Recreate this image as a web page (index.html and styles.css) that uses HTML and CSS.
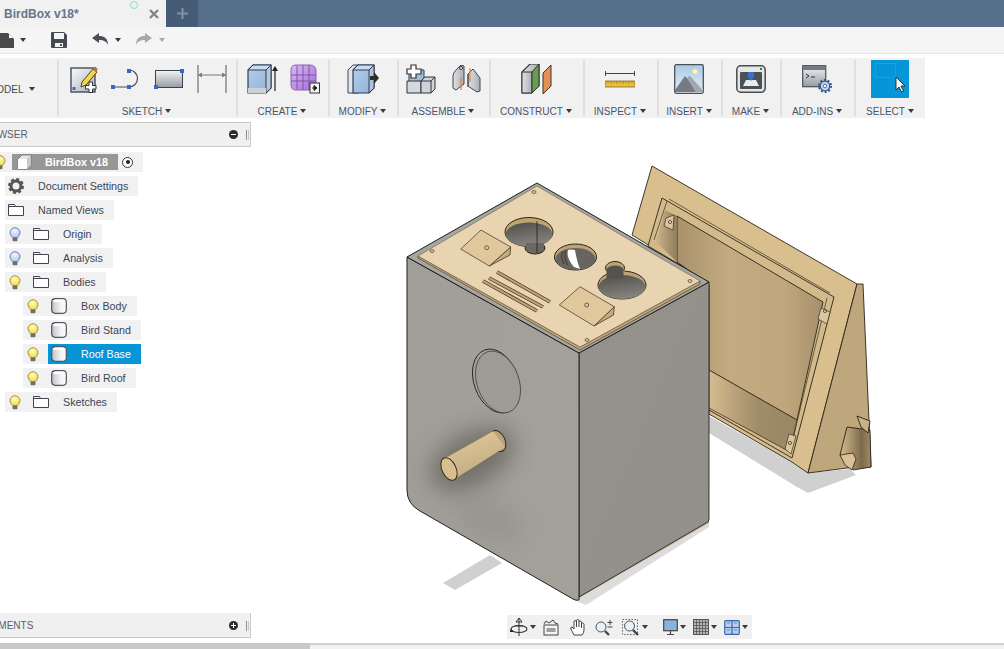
FILE: index.html
```html
<!DOCTYPE html>
<html lang="en">
<head>
<meta charset="utf-8">
<title>BirdBox v18</title>
<link rel="stylesheet" href="styles.css">
</head>
<body>
<svg class="defs" width="0" height="0" aria-hidden="true">
  <defs>
    <linearGradient id="gSheet" x1="0" y1="0" x2="1" y2="1"><stop offset="0" stop-color="#fafafa"/><stop offset="1" stop-color="#aab0be"/></linearGradient>
    <linearGradient id="gRect" x1="0" y1="0" x2="0" y2="1"><stop offset="0" stop-color="#f4f4f4"/><stop offset="1" stop-color="#959aa6"/></linearGradient>
    <linearGradient id="gBlue" x1="0" y1="0" x2="1" y2="1"><stop offset="0" stop-color="#b7cfe8"/><stop offset="1" stop-color="#8fb0d6"/></linearGradient>
    <linearGradient id="gGrey" x1="0" y1="0" x2="1" y2="0"><stop offset="0" stop-color="#dfe2e6"/><stop offset="1" stop-color="#a9aeb8"/></linearGradient>
    <linearGradient id="gPurple" x1="0" y1="0" x2="1" y2="1"><stop offset="0" stop-color="#d9b8f0"/><stop offset="1" stop-color="#a36fd4"/></linearGradient>
    <linearGradient id="gSky" x1="0" y1="0" x2="0" y2="1"><stop offset="0" stop-color="#a8cbe8"/><stop offset="1" stop-color="#e6edf3"/></linearGradient>
    <linearGradient id="gCyl" x1="0" y1="0" x2="1" y2="0"><stop offset="0" stop-color="#bfc2c7"/><stop offset=".6" stop-color="#f2f2f2"/><stop offset="1" stop-color="#fff"/></linearGradient>
    <radialGradient id="gBulbY" cx=".45" cy=".35" r=".7"><stop offset="0" stop-color="#fffbc0"/><stop offset="1" stop-color="#f1d93c"/></radialGradient>
    <radialGradient id="gBulbB" cx=".45" cy=".35" r=".7"><stop offset="0" stop-color="#f2f6ff"/><stop offset="1" stop-color="#a9c2ef"/></radialGradient>
    <symbol id="bulbY" viewBox="0 0 12 15"><path d="M6 .7a5 5 0 0 1 5 5c0 2-1.500 2.900-2.200 4.800H3.200C2.500 8.600 1 7.700 1 5.700a5 5 0 0 1 5-5z" fill="url(#gBulbY)" stroke="#a5963f"/><rect x="3.500" y="10.800" width="5" height="3.400" rx="1" fill="#6e6e6e"/></symbol>
    <symbol id="bulbB" viewBox="0 0 12 15"><path d="M6 .7a5 5 0 0 1 5 5c0 2-1.500 2.900-2.200 4.800H3.200C2.500 8.600 1 7.700 1 5.700a5 5 0 0 1 5-5z" fill="url(#gBulbB)" stroke="#6f86b6"/><rect x="3.500" y="10.800" width="5" height="3.400" rx="1" fill="#6e6e6e"/></symbol>
    <symbol id="folder" viewBox="0 0 16 12"><path d="M.5 11.500V.5h6l1 2h8v9z" fill="#fdfdfd" stroke="#3e4450"/><path d="M.5 2.500h7" stroke="#3e4450" fill="none"/></symbol>
    <symbol id="body" viewBox="0 0 16 16"><rect x=".7" y=".7" width="14.600" height="14.600" rx="3.500" fill="url(#gCyl)" stroke="#4e5560" stroke-width="1.200"/><path d="M1.500 3c1.500 1.600 11.500 1.600 13 0v-.5C13 1 3 1 1.500 2.500z" fill="#fff"/></symbol>
  </defs>
</svg>

<header class="tabs">
  <div class="tab">
    <span class="tab-title">BirdBox v18*</span>
    <span class="tab-dot"></span>
    <svg class="tab-close" width="10" height="10" viewBox="0 0 10 10"><path d="M1 1l8 8M9 1L1 9" stroke="#858585" stroke-width="2.400"/></svg>
  </div>
  <div class="tab-new"><svg width="11" height="11" viewBox="0 0 11 11"><path d="M5.500 0v11M0 5.500h11" stroke="#8093a6" stroke-width="2"/></svg></div>
</header>

<div class="qat">
  <svg class="q-doc" width="14" height="15" viewBox="0 0 14 15"><path d="M0 0h8l6 6v9H0z" fill="#4a4a4a"/><path d="M9 1l4 4H9z" fill="#fff"/></svg>
  <span class="caret q-c1"></span>
  <svg class="q-save" width="16" height="16" viewBox="0 0 16 16"><path d="M1 0h12l3 3v12a1 1 0 0 1-1 1H1a1 1 0 0 1-1-1V1a1 1 0 0 1 1-1z" fill="#454a50"/><rect x="3" y="1" width="10" height="6" fill="#f4f4f4"/><rect x="4" y="11" width="8" height="4" fill="#f4f4f4"/><rect x="9" y="12" width="2" height="2" fill="#454a50"/></svg>
  <svg class="q-undo" width="16" height="14" viewBox="0 0 16 14"><path d="M0 5L7 0v3c5 0 9 2 9 9-1-3-4-5-9-5v3z" fill="#4c5056"/></svg>
  <span class="caret q-c2"></span>
  <svg class="q-redo" width="16" height="14" viewBox="0 0 16 14"><path d="M16 5L9 0v3c-5 0-9 2-9 9 1-3 4-5 9-5v3z" fill="#a5a8ac"/></svg>
  <span class="caret caret-off q-c2"></span>
</div>

<nav class="ribbon">
  <div class="group g-model"><span class="model-name">MODEL</span><span class="caret model-caret"></span></div>

  <section class="group g-sketch">
    <div class="icons shift4">
      <svg width="28" height="28" viewBox="0 0 28 28"><rect x="1" y="3" width="24" height="24" fill="url(#gSheet)" stroke="#39424f" stroke-width="1.300"/><path d="M12 17l11-13 4 3-11 13-5 2z" fill="#f7d64a" stroke="#4a4030"/><path d="M23 4l2-2.500 3 2.500-2 3z" fill="#c0743a"/><rect x="2.500" y="22" width="3" height="3" fill="#3a6bc9"/><path d="M19 17h3.500v3.500H26V24h-3.500v3.500H19V24h-3.500v-3.500H19z" fill="#fff" stroke="#333"/></svg>
      <svg width="30" height="20" viewBox="0 0 30 20"><path d="M3 18h15M18 18a8.500 8.500 0 0 0 0-17" fill="none" stroke="#444b57" stroke-width="1.200"/><rect x="0" y="16" width="4" height="4" fill="#3568c9"/><rect x="16" y="16" width="4" height="4" fill="#3568c9"/><rect x="16" y="0" width="4" height="4" fill="#3568c9"/></svg>
      <svg width="30" height="20" viewBox="0 0 30 20"><rect x="1.500" y="1.500" width="27" height="17" fill="url(#gRect)" stroke="#39424f"/><rect x="26" y="0" width="4" height="4" fill="#3568c9"/><rect x="0" y="16" width="4" height="4" fill="#3568c9"/></svg>
      <svg width="30" height="28" viewBox="0 0 30 28"><path d="M1 0v28M29 0v28" stroke="#7a7a7a" stroke-width="1.300"/><path d="M1 10h28" stroke="#7a7a7a"/><path d="M1 10l4-2.500v5zM29 10l-4-2.500v5z" fill="#7a7a7a"/></svg>
    </div>
    <div class="label">SKETCH<span class="caret"></span></div>
  </section>

  <section class="group g-create">
    <div class="icons shift3">
      <svg width="31" height="30" viewBox="0 0 31 30"><path d="M1 6l5-5h18v23l-5 5H1z" fill="url(#gBlue)" stroke="#2f3e52" stroke-width="1.200"/><path d="M1 6l5-5h18l-5 5z" fill="#c7dcf0" stroke="#2f3e52"/><path d="M19 6l5-5v23l-5 5z" fill="#b7c8da" stroke="#2f3e52"/><path d="M1 24h18v5H1z" fill="#ccd2d8"/><path d="M28 27V5" stroke="#222" stroke-width="1.200"/><path d="M28 2l-3 5h6z" fill="#222"/></svg>
      <svg width="30" height="30" viewBox="0 0 30 30"><path d="M1 6q0-5 5-5h14q6 0 6 6v15q0 4-5 4H6q-5 0-5-5z" fill="url(#gPurple)" stroke="#8a63ad"/><path d="M1 11h25M1 17h25M7 2v23M13 1v25M19 1v25" stroke="#7c4fa8" stroke-width=".9"/><rect x="20" y="19" width="9.500" height="10" fill="#f3f3f3" stroke="#333"/><path d="M22 24h4M24 21.500L27 24l-3 2.500z" stroke="#222" fill="#222"/></svg>
    </div>
    <div class="label">CREATE<span class="caret"></span></div>
  </section>

  <section class="group g-modify">
    <div class="icons">
      <svg width="32" height="30" viewBox="0 0 32 30"><path d="M1 6l5-5h6v28H1z" fill="#e3e6ea" stroke="#3b4756"/><path d="M6 6l5-5h16v23l-5 5H6z" fill="url(#gBlue)" stroke="#2f3e52" stroke-width="1.200"/><path d="M6 6l5-5h16l-5 5z" fill="#c7dcf0" stroke="#2f3e52"/><path d="M22 6l5-5v23l-5 5z" fill="#afc3d8" stroke="#2f3e52"/><path d="M23 12h4V8l5 6-5 6v-4h-4z" fill="#2e2e2e"/></svg>
    </div>
    <div class="label">MODIFY<span class="caret"></span></div>
  </section>

  <section class="group g-assemble">
    <div class="icons">
      <svg width="31" height="30" viewBox="0 0 31 30"><path d="M3 6h15v13H3z" fill="url(#gBlue)" stroke="#2f3e52"/><path d="M1 17h14v12H1z" fill="#d5d8dd" stroke="#333"/><path d="M15 17l4-4h10v12l-4 4H15z" fill="#cfd3d9" stroke="#333"/><path d="M15 17h10l4-4" fill="none" stroke="#333"/><path d="M25 17v12" stroke="#333"/><path d="M5 1h5v4h5v5h-5v4H5v-4H1V5h4z" fill="#fff" stroke="#333" stroke-width="1.200"/></svg>
      <svg width="29" height="28" viewBox="0 0 29 28"><path d="M1 11q0-3 3-6l5-5 3 1v18l-8 6-3-2z" fill="url(#gGrey)" stroke="#444"/><circle cx="9" cy="3" r="1.500" fill="#fff" stroke="#333"/><path d="M16 9l5-5 7 9v13l-3 1-9-6z" fill="url(#gGrey)" stroke="#444"/><path d="M16 9v13" stroke="#444"/><path d="M9 12v13M18 3v14" stroke="#e8842c" stroke-width="1.200"/></svg>
    </div>
    <div class="label">ASSEMBLE<span class="caret"></span></div>
  </section>

  <section class="group g-construct">
    <div class="icons">
      <svg width="31" height="30" viewBox="0 0 31 30"><path d="M1 8l8-8h9v22l-8 7H1z" fill="url(#gGrey)" stroke="#333" stroke-width="1.100"/><path d="M1 8h10v21H1z" fill="url(#gGrey)" stroke="#333"/><path d="M11 8l7-8v22l-7 7z" fill="#6a9a54" stroke="#2c3a28"/><path d="M22 9l8-8v21l-8 8z" fill="#e28f58" stroke="#4a3020"/></svg>
    </div>
    <div class="label">CONSTRUCT<span class="caret"></span></div>
  </section>

  <section class="group g-inspect">
    <div class="icons">
      <svg width="30" height="17" viewBox="0 0 30 17"><path d="M.5 0v5M29.500 0v5" stroke="#444"/><path d="M1 2.500h28" stroke="#444"/><rect x="0" y="10" width="30" height="6" fill="#e9bd3a" stroke="#8b6d24" stroke-width=".8"/><path d="M3 10v2M6 10v3M9 10v2M12 10v3M15 10v2M18 10v3M21 10v2M24 10v3M27 10v2" stroke="#7a5d1c" stroke-width=".6"/></svg>
    </div>
    <div class="label">INSPECT<span class="caret"></span></div>
  </section>

  <section class="group g-insert">
    <div class="icons">
      <svg width="30" height="30" viewBox="0 0 30 30"><rect x=".7" y=".7" width="28.600" height="28.600" rx="1.500" fill="url(#gSky)" stroke="#4a4f56" stroke-width="1.300"/><circle cx="21" cy="7.500" r="2.500" fill="#fff6b8" stroke="#f4e08a"/><path d="M1 26L11 12l6 7 5 9H1z" fill="#767a82"/><path d="M13 14l3-3 13 14v3h-7l-6-9z" fill="#a2a8b0"/><path d="M16 11l13 15" stroke="#e6e8ea"/></svg>
    </div>
    <div class="label">INSERT<span class="caret"></span></div>
  </section>

  <section class="group g-make">
    <div class="icons">
      <svg width="30" height="28" viewBox="0 0 30 28"><rect x=".8" y=".8" width="28.400" height="26.400" rx="4" fill="#e6e6e6" stroke="#4a4a4a" stroke-width="1.500"/><rect x="4" y="7" width="22" height="17" rx="1" fill="#4b4f56"/><path d="M7 21l3-6h10l3 6z" fill="#e9ecef"/><path d="M12 7h6v5l-3 4-3-4z" fill="#3a70c4"/><rect x="24" y="3" width="2" height="2" fill="#1f8a2c"/></svg>
    </div>
    <div class="label">MAKE<span class="caret"></span></div>
  </section>

  <section class="group g-addins">
    <div class="icons">
      <svg width="30" height="28" viewBox="0 0 30 28"><rect x=".7" y=".7" width="23" height="21" fill="url(#gRect)" stroke="#4a4f56" stroke-width="1.200"/><rect x="1" y="1" width="22.500" height="4" fill="#737a86"/><path d="M4 9l3 2-3 2M9 12h4" stroke="#333" fill="none"/><circle cx="23" cy="21" r="4.800" fill="#c8d6ec" stroke="#34568e" stroke-width="1.200"/><circle cx="23" cy="21" r="6" fill="none" stroke="#34568e" stroke-width="2" stroke-dasharray="2 1.770"/><circle cx="23" cy="21" r="1.800" fill="#fff" stroke="#34568e" stroke-width=".8"/></svg>
    </div>
    <div class="label">ADD-INS<span class="caret"></span></div>
  </section>

  <section class="group g-select">
    <div class="icons">
      <svg width="38" height="38" viewBox="0 0 38 38"><rect width="38" height="38" fill="#0696d7"/><rect x="4.500" y="3.500" width="20" height="14" fill="none" stroke="#5c9e3e"/><path d="M25 17v13l3-3 2.500 5 2-1-2.500-5h4z" fill="#fff" stroke="#222" stroke-width=".9"/></svg>
    </div>
    <div class="label">SELECT<span class="caret"></span></div>
  </section>
</nav>

<main class="workspace">
  <svg class="model" viewBox="0 118 1004 525" width="1004" height="525" aria-hidden="true">
    <defs>
      <linearGradient id="mLeft" x1="0" y1="0" x2="1" y2="0"><stop offset="0" stop-color="#a09e97"/><stop offset="1" stop-color="#a3a19a"/></linearGradient>
      <linearGradient id="mRight" x1="0" y1="0" x2="1" y2="1"><stop offset="0" stop-color="#94928b"/><stop offset="1" stop-color="#92908a"/></linearGradient>
      <linearGradient id="mHole" x1="0" y1="0" x2=".3" y2="1"><stop offset="0" stop-color="#4f4d49"/><stop offset="1" stop-color="#84827b"/></linearGradient>
      <linearGradient id="mPanel" x1="0" y1="0" x2="1" y2="0"><stop offset="0" stop-color="#a8916b"/><stop offset=".35" stop-color="#c3aa80"/><stop offset=".75" stop-color="#bfa67c"/><stop offset="1" stop-color="#a58f6b"/></linearGradient>
      <linearGradient id="mFloor" x1="0" y1="0" x2="1" y2="0"><stop offset="0" stop-color="#d6bc8e"/><stop offset=".55" stop-color="#a08c68"/><stop offset="1" stop-color="#9a8663"/></linearGradient>
      <linearGradient id="mWall" x1="0" y1="0" x2="1" y2="0"><stop offset="0" stop-color="#cdb589"/><stop offset="1" stop-color="#8f7c5b"/></linearGradient>
      <linearGradient id="mPeg" x1="0" y1="0" x2=".45" y2="1"><stop offset="0" stop-color="#e4cc9c"/><stop offset="1" stop-color="#c2ab83"/></linearGradient>
      <linearGradient id="mBracket" x1="0" y1="0" x2="1" y2="0"><stop offset="0" stop-color="#d6bd8e"/><stop offset=".7" stop-color="#7c6a4c"/><stop offset="1" stop-color="#a08c68"/></linearGradient>
      <filter id="mBlur" x="-50%" y="-50%" width="200%" height="200%"><feGaussianBlur stdDeviation="11"/></filter>
      <clipPath id="mFaceClip"><path d="M407 257L579 353V600q-3 1-6-1L420 511q-13-7-13-21z"/></clipPath>
    </defs>

    <!-- ground shadows -->
    <path d="M443 583l12 7 47-27-12-8z" fill="#d0d0d0"/>
    <path d="M709 416v17l88 54 11 6 48-18-6-6-42 4-16-11z" fill="#d0d0d0"/>
    <path d="M579 597L709 520v7L586 605l-8-3z" fill="#dcdcdc"/>

    <!-- rear shell -->
    <g stroke-linejoin="round">
      <path d="M652 166L857 284 808 473 792 462 709 414V282L632 235z" fill="#d9bf8e" stroke="#2a241a" stroke-width=".9"/>
      <path d="M857 284h6l8 183-24 1-39 5z" fill="#bfa77d" stroke="#2a241a" stroke-width=".9"/>
      <path d="M662 198L834 297 792 458 709 410V282L648 246z" fill="#d3ba8b" stroke="#2a241a" stroke-width=".9"/>
      <path d="M677 216L823 302 797 420 709 370V285L677 262z" fill="url(#mPanel)" stroke="#2a241a" stroke-width=".9"/>
      <path d="M709 370L797 420 790 452 709 408z" fill="url(#mFloor)" stroke="#2a241a" stroke-width=".7"/>
      <path d="M656 242L665 210 677 216V262z" fill="url(#mWall)"/>
      <path d="M669 199L830 293M827 298L790 451M654 240L667 201" fill="none" stroke="#3a3224" stroke-width=".7"/>
      <path d="M666 218l8-3-1 15-9-4z" fill="#dac59c" stroke="#3a3224" stroke-width=".7"/>
      <path d="M821 308l9 4-3 12-9-5z" fill="#dac59c" stroke="#3a3224" stroke-width=".7"/>
      <path d="M789 434l7 2-5 18-6-5z" fill="#dac59c" stroke="#3a3224" stroke-width=".7"/>
      <circle cx="670" cy="222" r="1.600" fill="none" stroke="#3a3224" stroke-width=".7"/>
      <circle cx="825" cy="311" r="1.600" fill="none" stroke="#3a3224" stroke-width=".7"/>
      <circle cx="790" cy="443" r="1.600" fill="none" stroke="#3a3224" stroke-width=".7"/>
      <path d="M847 427l23 3 1 37-18 3-13-15z" fill="url(#mBracket)" stroke="#2a241a" stroke-width=".9"/>
      <path d="M857 416l13 5-2 12-7-6z" fill="#c8b087" stroke="#2a241a" stroke-width=".9"/>
      <path d="M840 455l13-2 3 6-4 11-7-5z" fill="#d9c193" stroke="#2a241a" stroke-width=".8"/>
    </g>

    <!-- box -->
    <path d="M579 598L709 523v-3L579 595z" fill="#c9b48e"/>
    <path d="M579 353L709 282V519q0 3-3 4L579 597z" fill="url(#mRight)" stroke="#262626" stroke-width=".9"/>
    <path d="M407 257L579 353V600q-3 1-6-1L420 511q-13-7-13-21z" fill="url(#mLeft)" stroke="#1e1e1e" stroke-width="1"/>
    <g clip-path="url(#mFaceClip)">
      <ellipse cx="472" cy="459" rx="46" ry="26" transform="rotate(-30 472 459)" fill="#55534c" opacity=".6" filter="url(#mBlur)"/>
      <ellipse cx="490" cy="520" rx="34" ry="18" transform="rotate(20 490 520)" fill="#777" opacity=".25" filter="url(#mBlur)"/>
    </g>

    <!-- entrance -->
    <ellipse cx="496" cy="381" rx="22" ry="33" transform="rotate(-20 496 381)" fill="#a3a19a" stroke="#262626" stroke-width=".9"/>
    <ellipse cx="498" cy="382" rx="21" ry="32" transform="rotate(-20 498 382)" fill="#9d9b94" stroke="#3a3a3a" stroke-width=".7"/>

    <!-- perch -->
    <ellipse cx="498" cy="441" rx="7" ry="11" transform="rotate(-25 498 441)" fill="#b9a27c" stroke="#2a241a" stroke-width=".9"/>
    <path d="M445 458L493 431 505 447 455 479z" fill="url(#mPeg)"/>
    <path d="M445 458L493 431M455 479L499 453" stroke="#7f6f52" stroke-width=".5" fill="none"/>
    <ellipse cx="449" cy="469" rx="7" ry="12" transform="rotate(-25 449 469)" fill="#d8bf8f" stroke="#2a241a" stroke-width=".9"/>

    <!-- top -->
    <path d="M537 183L709 282 579 353 407 257z" fill="#a6a59e" stroke="#1e1e1e" stroke-width="1"/>
    <path d="M418 258L580 350 700 284 700 281 580 347 418 256z" fill="#c4a678" stroke="#3a3224" stroke-width=".6"/>
    <path d="M537 186L700 281 580 347 418 256z" fill="#e8d4b0" stroke="#57503f" stroke-width=".5"/>

    <!-- hole 1 -->
    <ellipse cx="529" cy="232" rx="24" ry="14.500" fill="#bfa373" stroke="#2a241a"/>
    <ellipse cx="535" cy="248" rx="10" ry="6" fill="#6a6863" stroke="#2a241a"/>
    <ellipse cx="529" cy="234.500" rx="23.500" ry="12" fill="url(#mHole)"/>
    <path d="M526 243h18v6h-18z" fill="#6a6863"/>
    <path d="M537 221V253" stroke="#222" stroke-width=".8"/>

    <!-- hole 2 -->
    <ellipse cx="575.500" cy="257" rx="21" ry="13" fill="#bfa373" stroke="#2a241a"/>
    <ellipse cx="575.500" cy="259" rx="20" ry="11" fill="#67655f"/>
    <path d="M568 250q3-1 7 0 2 12 5 19l-6-2q-8-9-6-17z" fill="#fff"/>
    <path d="M563 251q-3 6 1 13M566 250q-3 8 2 15" stroke="#222" stroke-width=".7" fill="none"/>

    <!-- hole 3 -->
    <ellipse cx="615" cy="268" rx="9.500" ry="6.500" fill="#bfa373" stroke="#2a241a"/>
    <ellipse cx="622" cy="285" rx="24" ry="14" fill="#bfa373" stroke="#2a241a"/>
    <path d="M606.500 270h18v8h-18z" fill="#bfa373"/>
    <ellipse cx="622" cy="287" rx="23.500" ry="12" fill="url(#mHole)"/>
    <ellipse cx="615" cy="270" rx="8.500" ry="4.500" fill="#55534e"/>
    <path d="M606.500 270h17v9h-17z" fill="#55534e"/>

    <!-- wedges -->
    <path d="M510.700 247L510 255 489.300 266z" fill="#c7ab7c" stroke="#2a241a" stroke-width=".7"/>
    <path d="M481 230L510.700 247 489.300 266 460.700 249z" fill="#e0c79c" stroke="#3a3224" stroke-width=".7"/>
    <circle cx="486.700" cy="247.700" r="2" fill="none" stroke="#3a3224" stroke-width=".7"/>
    <path d="M614.300 306.700L613.500 315 594 326z" fill="#c7ab7c" stroke="#2a241a" stroke-width=".7"/>
    <path d="M580 286.700L614.300 306.700 594 326 559.300 305z" fill="#e0c79c" stroke="#3a3224" stroke-width=".7"/>
    <circle cx="586.700" cy="305" r="2" fill="none" stroke="#3a3224" stroke-width=".7"/>

    <!-- vents -->
    <g stroke-linecap="butt">
      <path d="M497 272L550 302M489 278L543 307M483 281L537 311" stroke="#3a3224" stroke-width="3.600"/>
      <path d="M497 272L550 302M489 278L543 307M483 281L537 311" stroke="#c0a273" stroke-width="2.200"/>
    </g>

    <!-- screws -->
    <g fill="#d6c3a0" stroke="#4a4334" stroke-width=".7">
      <ellipse cx="534" cy="192" rx="2" ry="1.500"/>
      <ellipse cx="432" cy="251" rx="2" ry="1.500"/>
      <ellipse cx="690" cy="281" rx="2" ry="1.500"/>
      <ellipse cx="587" cy="340" rx="2" ry="1.500"/>
    </g>
  </svg>

  <aside class="sidebar">
    <div class="panel">
      <span class="panel-title browser-title">BROWSER</span>
      <span class="panel-btn"><span class="minus"></span></span>
      <span class="grip"></span>
    </div>

    <ul class="tree">
      <li class="row row-root">
        <span class="bulb"><svg width="12" height="15"><use href="#bulbY"/></svg></span>
        <span class="node node-active">
          <svg class="node-icon" width="16" height="16" viewBox="0 0 16 16"><path d="M1 5l4-4h9v10l-4 4H1z" fill="#e6e6e6" stroke="#666" stroke-width=".7"/><path d="M1 5h9v10H1z" fill="#fff"/><path d="M10 5l4-4v10l-4 4z" fill="#c8c8c8"/></svg>
          <span class="name-strong">BirdBox v18</span>
        </span>
        <span class="radio"></span>
      </li>
      <li class="row row-1">
        <span class="node">
          <svg class="node-icon" width="16" height="16" viewBox="0 0 16 16"><circle cx="8" cy="8" r="5" fill="none" stroke="#555" stroke-width="3"/><circle cx="8" cy="8" r="6.800" fill="none" stroke="#555" stroke-width="2.400" stroke-dasharray="3 2.340"/></svg>
          <span>Document Settings</span>
        </span>
      </li>
      <li class="row row-1">
        <span class="node"><svg class="node-icon" width="16" height="12"><use href="#folder"/></svg><span>Named Views</span></span>
      </li>
      <li class="row row-1">
        <span class="bulb"><svg width="12" height="15"><use href="#bulbB"/></svg></span>
        <span class="node node-sub"><svg class="node-icon" width="16" height="12"><use href="#folder"/></svg><span>Origin</span></span>
      </li>
      <li class="row row-1">
        <span class="bulb"><svg width="12" height="15"><use href="#bulbB"/></svg></span>
        <span class="node node-sub"><svg class="node-icon" width="16" height="12"><use href="#folder"/></svg><span>Analysis</span></span>
      </li>
      <li class="row row-1">
        <span class="bulb"><svg width="12" height="15"><use href="#bulbY"/></svg></span>
        <span class="node node-sub"><svg class="node-icon" width="16" height="12"><use href="#folder"/></svg><span>Bodies</span></span>
      </li>
      <li class="row row-2">
        <span class="bulb"><svg width="12" height="15"><use href="#bulbY"/></svg></span>
        <span class="node node-sub"><svg class="node-icon" width="16" height="16"><use href="#body"/></svg><span>Box Body</span></span>
      </li>
      <li class="row row-2">
        <span class="bulb"><svg width="12" height="15"><use href="#bulbY"/></svg></span>
        <span class="node node-sub"><svg class="node-icon" width="16" height="16"><use href="#body"/></svg><span>Bird Stand</span></span>
      </li>
      <li class="row row-2">
        <span class="bulb"><svg width="12" height="15"><use href="#bulbY"/></svg></span>
        <span class="node node-sub node-selected"><svg class="node-icon" width="16" height="16"><use href="#body"/></svg><span>Roof Base</span></span>
      </li>
      <li class="row row-2">
        <span class="bulb"><svg width="12" height="15"><use href="#bulbY"/></svg></span>
        <span class="node node-sub"><svg class="node-icon" width="16" height="16"><use href="#body"/></svg><span>Bird Roof</span></span>
      </li>
      <li class="row row-1">
        <span class="bulb"><svg width="12" height="15"><use href="#bulbY"/></svg></span>
        <span class="node node-sub"><svg class="node-icon" width="16" height="12"><use href="#folder"/></svg><span>Sketches</span></span>
      </li>
    </ul>

    <div class="panel panel-bottom">
      <span class="panel-title comments-title">COMMENTS</span>
      <span class="panel-btn"><span class="minus plus"></span></span>
      <span class="grip"></span>
    </div>
  </aside>

  <div class="viewport">
    <div class="navbar">
      <svg class="n-orbit" width="18" height="20" viewBox="0 0 18 20"><path d="M9 1v18M9 1L6 5h6zM5 9h8" stroke="#333" fill="#fff"/><ellipse cx="9" cy="12" rx="8" ry="3.500" fill="none" stroke="#333" stroke-width="1.100"/><path d="M1 12l3 3-5 0z" fill="#222"/></svg>
      <span class="caret n-c"></span>
      <svg class="n-look" width="16" height="17" viewBox="0 0 16 17"><path d="M1 5l2-3 3 2 4-3 2 3 3 1" fill="none" stroke="#444"/><rect x="1" y="6" width="14" height="10" fill="#f4f4f4" stroke="#444"/><rect x="3.500" y="9" width="9" height="4" fill="#9a9fa8"/></svg>
      <svg class="n-pan" width="15" height="17" viewBox="0 0 15 17"><path d="M4 16Q2 12 1 10q-1-2 1-2l2 2V3q0-1.500 1.200-1.500T6.500 3V1.800Q6.500.5 7.700.5T9 1.800V3q0-1 1.200-1t1.300 1.200V5q0-1 1.100-1T14 5.200V11q0 3-2 5z" fill="#fff" stroke="#444"/><path d="M6.500 3v5M9 3v5M11.500 5v4" stroke="#444" fill="none"/></svg>
      <svg class="n-zoom" width="18" height="17" viewBox="0 0 18 17"><circle cx="6" cy="8" r="5" fill="#e8f1f8" stroke="#555"/><path d="M10 12l4 4" stroke="#444" stroke-width="2.400"/><path d="M15 1v5M12.500 3.500h5M12.500 8h5" stroke="#444"/></svg>
      <svg class="n-fit" width="17" height="17" viewBox="0 0 17 17"><rect x=".5" y=".5" width="15" height="15" fill="none" stroke="#666" stroke-dasharray="1.500 1.500"/><circle cx="7.500" cy="7" r="5" fill="#e8f1f8" stroke="#555"/><path d="M11 11l5 5" stroke="#444" stroke-width="2.400"/></svg>
      <span class="caret n-c n-c-fit"></span>
      <svg class="n-display" width="15" height="17" viewBox="0 0 15 17"><rect x=".7" y=".7" width="13.600" height="11" fill="#89b2de" stroke="#444" stroke-width="1.200"/><path d="M7.500 12v3M4 15.500h7" stroke="#444" stroke-width="1.200"/></svg>
      <span class="caret n-c"></span>
      <svg class="n-grid" width="16" height="16" viewBox="0 0 16 16"><rect x=".5" y=".5" width="15" height="15" fill="#b5b5b5" stroke="#555"/><path d="M3.500 0v16M6.500 0v16M9.500 0v16M12.500 0v16M0 3.500h16M0 6.500h16M0 9.500h16M0 12.500h16" stroke="#555" stroke-width=".8"/></svg>
      <span class="caret n-c"></span>
      <svg class="n-views" width="16" height="15" viewBox="0 0 16 15"><rect x=".7" y=".7" width="14.600" height="13.600" rx="1" fill="#b6cfee" stroke="#3a69a8" stroke-width="1.200"/><path d="M8 1v13M1 7.500h14" stroke="#3a69a8" stroke-width="1.200"/><path d="M3 3h3M10 3h3M3 10h3M10 10h3" stroke="#5b85bb"/></svg>
      <span class="caret n-c"></span>
    </div>
  </div>
</main>

<footer class="scrollbar"><span class="scroll-thumb"></span></footer>
</body>
</html>
```

FILE: styles.css
```css
* { box-sizing: border-box; }

html, body {
  margin: 0;
  padding: 0;
}

body {
  width: 1004px;
  height: 649px;
  overflow: hidden;
  display: flex;
  flex-direction: column;
  background: #fff;
  font-family: "Liberation Sans", Arial, sans-serif;
  font-size: 10.7px;
  color: #3c4658;
}

svg { display: block; flex: none; }

.defs { position: absolute; }

.caret {
  display: inline-block;
  flex: none;
  width: 0;
  height: 0;
  border-left: 3px solid transparent;
  border-right: 3px solid transparent;
  border-top: 4px solid #3b3b3b;
}

.caret-off { border-top-color: #a8a8a8; }

/* tab strip */
.tabs {
  display: flex;
  flex: none;
  height: 27px;
  background: #56708c;
}

.tab {
  position: relative;
  display: flex;
  align-items: center;
  width: 166px;
  padding-left: 4px;
  background: #f1f1f1;
}

.tab-title {
  font-size: 12px;
  font-weight: bold;
  color: #66758a;
}

.tab-dot {
  position: absolute;
  top: 1px;
  left: 130px;
  width: 8px;
  height: 8px;
  border: 1px solid #8fdcc6;
  border-radius: 50%;
}

.tab-close { margin-left: 70px; }

.tab-new {
  display: flex;
  align-items: center;
  justify-content: center;
  width: 32px;
  background: #465c76;
}

/* quick access */
.qat {
  display: flex;
  flex: none;
  align-items: center;
  height: 27px;
  background: #f5f5f5;
  border-bottom: 1px solid #e6e6e6;
}

.q-c1 { margin-left: 6px; }
.q-save { margin-left: 25px; }
.q-undo { margin-left: 25px; }
.q-c2 { margin-left: 7px; }
.q-redo { margin-left: 15px; }

/* ribbon */
.ribbon {
  display: flex;
  flex: none;
  width: 925px;
  height: 60px;
  margin-top: 4px;
  background: #f1f1f1;
}

.group {
  display: flex;
  flex-direction: column;
  flex: none;
  height: 56px;
  margin-top: 2px;
  padding-right: 2px;
  border-right: 2px solid #dedede;
}

.g-model {
  flex-direction: row;
  align-items: center;
  width: 59px;
  padding-top: 2px;
}

.model-name {
  flex: none;
  margin-left: -12px;
  font-size: 10px;
  white-space: nowrap;
}

.model-caret { margin-left: 5px; }

.g-sketch { width: 179px; }
.g-create { width: 92px; }
.g-modify { width: 69px; }
.g-assemble { width: 92px; }
.g-construct { width: 94px; }
.g-inspect { width: 74px; }
.g-insert { width: 64px; }
.g-make { width: 59px; }
.g-addins { width: 74px; }
.g-select { width: 69px; padding-right: 1px; border-right: 0; }

.icons {
  display: flex;
  flex: none;
  align-items: center;
  justify-content: center;
  height: 38px;
  gap: 13px;
}

.shift4 { padding-left: 4px; }
.shift3 { padding-left: 3px; gap: 12px; }
.g-assemble .icons { gap: 15px; }

.label {
  display: flex;
  flex: none;
  align-items: center;
  justify-content: center;
  gap: 3px;
  height: 14px;
  margin-top: 6px;
  font-size: 10px;
  color: #4a5568;
  white-space: nowrap;
}

/* workspace */
.workspace {
  position: relative;
  display: flex;
  flex: 1;
  min-height: 0;
}

.model {
  position: absolute;
  top: 0;
  left: 0;
}

.sidebar {
  position: relative;
  display: flex;
  flex-direction: column;
  flex: none;
  width: 251px;
}

.panel {
  display: flex;
  flex: none;
  align-items: center;
  height: 25px;
  margin-top: 4px;
  background: #f0f0f0;
  border: 1px solid #c9c9c9;
  border-left: 0;
}

.panel-bottom {
  margin-top: auto;
  margin-bottom: 5px;
  padding-top: 1px;
  border-top: 0;
}

.panel-title {
  font-size: 10px;
  color: #57606e;
  white-space: nowrap;
}

.browser-title { margin-left: -24px; }
.comments-title { margin-left: -25px; }

.panel-btn { margin-left: auto; }

.minus {
  position: relative;
  display: block;
  width: 9px;
  height: 9px;
  border-radius: 50%;
  background: #2b2b2b;
}

.minus::before {
  content: "";
  position: absolute;
  top: 4px;
  left: 2px;
  width: 5px;
  height: 1px;
  background: #fff;
}

.plus::after {
  content: "";
  position: absolute;
  top: 2px;
  left: 4px;
  width: 1px;
  height: 5px;
  background: #fff;
}

.grip {
  width: 3px;
  height: 10px;
  margin: 0 1px 0 8px;
  border-left: 1px solid #8e8e8e;
  border-right: 1px solid #c8c8c8;
}

/* browser tree */
.tree {
  display: flex;
  flex-direction: column;
  align-items: flex-start;
  gap: 4px;
  margin: 5px 0 0;
  padding: 0;
  list-style: none;
}

.row {
  display: flex;
  align-items: center;
  height: 20px;
  background: #f1f1f1;
  white-space: nowrap;
}

.row-root { margin-left: -10px; }
.row-1 { margin-left: 5px; }
.row-2 { margin-left: 23px; }

.bulb {
  display: flex;
  justify-content: center;
  flex: none;
  width: 20px;
}

.node {
  display: flex;
  align-items: center;
  height: 20px;
  padding: 0 10px 0 3px;
}

.node-icon { width: 16px; margin-right: 14px; }

.node-sub { margin-left: 5px; }

.node-active {
  height: 16px;
  margin-left: 2px;
  padding-left: 5px;
  background: #969696;
  color: #fff;
}

.node-active .node-icon { margin-right: 12px; }

.name-strong { font-weight: bold; font-size: 10.8px; }

.node-selected {
  background: #0696d7;
  color: #fff;
}

.radio {
  position: relative;
  flex: none;
  width: 11px;
  height: 11px;
  margin: 0 10px 0 4px;
  border: 1px solid #333;
  border-radius: 50%;
  background: #fff;
}

.radio::after {
  content: "";
  position: absolute;
  top: 2.500px;
  left: 2.500px;
  width: 4px;
  height: 4px;
  border-radius: 50%;
  background: #222;
}

/* navigation bar */
.viewport {
  position: relative;
  display: flex;
  flex: 1;
  align-items: flex-end;
  min-width: 0;
}

.navbar {
  display: flex;
  align-items: center;
  width: 245px;
  height: 24px;
  margin: 0 0 4px 256px;
  padding-left: 3px;
  background: #f0f0f0;
}

.n-c { margin-left: 2px; }
.n-look { margin-left: 7px; }
.n-pan { margin-left: 11px; }
.n-zoom { margin-left: 10px; }
.n-fit { margin-left: 9px; }
.n-c-fit { margin-left: 3px; }
.n-display { margin-left: 15px; }
.n-grid { margin-left: 7px; }
.n-views { margin-left: 7px; }

/* bottom scrollbar */
.scrollbar {
  display: flex;
  flex: none;
  height: 6px;
  background: #f1f1f1;
  border-top: 2px solid #cfcfcf;
}

.scroll-thumb {
  width: 310px;
  margin-top: -2px;
  background: #c8c8c8;
}
```
